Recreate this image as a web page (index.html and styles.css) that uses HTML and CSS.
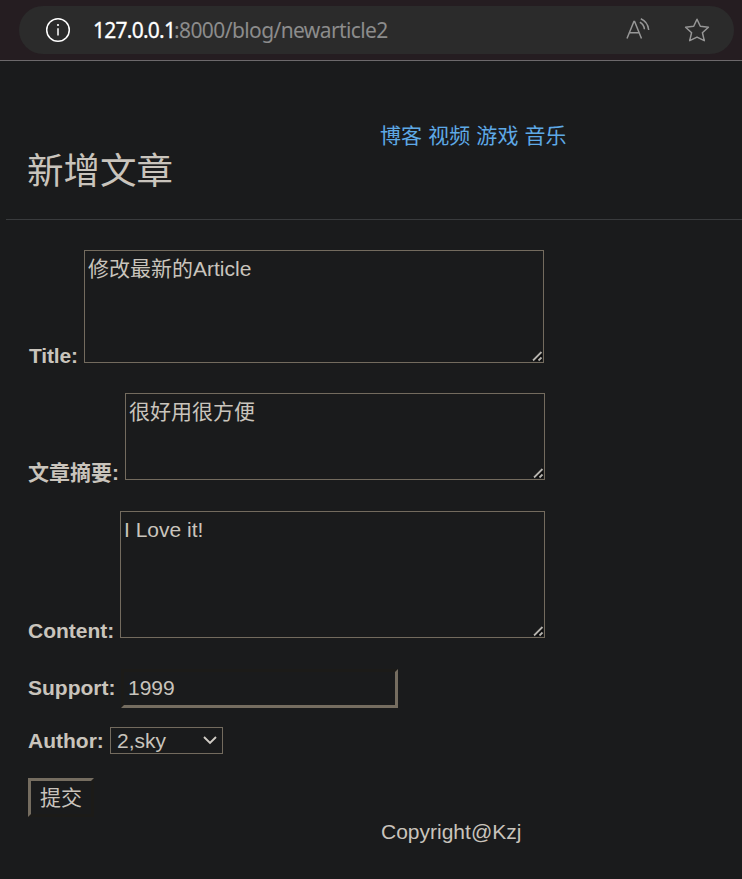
FILE: index.html
```html
<!DOCTYPE html>
<html lang="zh-CN">
<head>
<meta charset="utf-8">
<title>新增文章</title>
<link rel="stylesheet" href="styles.css">
</head>
<body>
<header class="toolbar">
  <div class="address">
    <svg class="info" width="26" height="26" viewBox="0 0 26 26" fill="none" stroke="#fff"><circle cx="13" cy="13" r="11.3" stroke-width="1.5"/><path d="M13 11.2v7.3" stroke-width="1.5"/><circle cx="13" cy="8" r="1.1" fill="#fff" stroke="none"/></svg>
    <span class="url"><span class="host">127.0.0.1</span><span class="path">:8000/blog/newarticle2</span></span>
    <svg class="read" width="26" height="26" viewBox="0 0 26 26" fill="none" stroke="#979797" stroke-width="1.5"><path d="M2 21.5 8.9 4.5h.7l6.9 17M4.6 15.7h9.4M14.8 5.2c2.6 1.2 4.3 3.9 4.6 7M15.8 1.8c4.3 1.8 7.3 6 7.9 11.2"/></svg>
    <svg class="star" width="26" height="26" viewBox="0 0 26 26" fill="none" stroke="#979797" stroke-width="1.5" stroke-linejoin="round"><path d="m13 2.2 3.3 7 8.1 1.1-6 5.4 1.9 8-7.3-3.6-7.3 3.6 1.9-8-6-5.4 8.1-1.1z"/></svg>
  </div>
</header>
<main class="page">
  <nav class="nav"><a>博客</a> <a>视频</a> <a>游戏</a> <a>音乐</a></nav>
  <h1 class="heading">新增文章</h1>
  <hr class="rule">
  <form class="form">
    <div class="row row-title">
      <label for="title">Title:</label>
      <div class="area"><textarea id="title">修改最新的Article</textarea><svg class="grip" width="12" height="12" viewBox="0 0 12 12"><path d="M0 11 11 0v11z" fill="#0c0c0c"/><path d="m2 10.5 8.5-8.5M7.5 10.5l3-3" stroke="#b5b3ae" stroke-width="1.8"/></svg></div>
    </div>
    <div class="row row-summary">
      <label for="summary">文章摘要:</label>
      <div class="area"><textarea id="summary">很好用很方便</textarea><svg class="grip" width="12" height="12" viewBox="0 0 12 12"><path d="M0 11 11 0v11z" fill="#0c0c0c"/><path d="m2 10.5 8.5-8.5M7.5 10.5l3-3" stroke="#b5b3ae" stroke-width="1.8"/></svg></div>
    </div>
    <div class="row row-content">
      <label for="content">Content:</label>
      <div class="area"><textarea id="content">I Love it!</textarea><svg class="grip" width="12" height="12" viewBox="0 0 12 12"><path d="M0 11 11 0v11z" fill="#0c0c0c"/><path d="m2 10.5 8.5-8.5M7.5 10.5l3-3" stroke="#b5b3ae" stroke-width="1.8"/></svg></div>
    </div>
    <div class="row row-support">
      <label for="support">Support:</label>
      <input class="support" id="support" value="1999">
    </div>
    <div class="row row-author">
      <label>Author:</label>
      <div class="select"><span>2,sky</span><svg width="14" height="9" viewBox="0 0 14 9" fill="none" stroke="#d0ccc5" stroke-width="1.9"><path d="m1 1 6 6 6-6"/></svg></div>
    </div>
    <button class="submit" type="button">提交</button>
  </form>
  <footer class="footer">Copyright@Kzj</footer>
</main>
</body>
</html>
```

FILE: styles.css
```css
* { box-sizing: border-box; }
body {
  margin: 0;
  height: 879px;
  overflow: hidden;
  background: #1a1b1c;
  color: #c9c4bc;
  font: 21px/24px "Liberation Sans", "Noto Sans CJK SC", sans-serif;
}
.toolbar {
  height: 61px;
  padding: 6px 8px 0 19px;
  background: #251d21;
  border-bottom: 1px solid #6c696b;
}
.address {
  display: flex;
  align-items: center;
  height: 48px;
  padding: 0 24px 0 26px;
  border-radius: 24px;
  background: #2b2b2b;
}
.url {
  flex: 1;
  margin-left: 22px;
  font: 21px/28px "Noto Sans", sans-serif;
  white-space: nowrap;
}
.host {
  display: inline-block;
  width: 81px;
  color: #fff;
  letter-spacing: -0.75px;
  -webkit-text-stroke: 0.3px #fff;
}
.path { color: #8c8c8c; letter-spacing: -0.6px; }
.read { margin-right: 33px; }
.page { padding-left: 28px; }
.nav { padding: 63px 0 0 352px; color: #5ea9e6; letter-spacing: 0.1px; }
.heading {
  margin: 4px 0 0 -1px;
  font-size: 36.5px;
  font-weight: 400;
  line-height: 40px;
}
.rule {
  height: 1px;
  margin: 27px 0 0 -22px;
  border: 0;
  background: #393b3d;
}
.row { display: flex; align-items: flex-end; }
label { flex: none; margin-bottom: -5px; font-weight: 700; white-space: nowrap; }
.area { position: relative; width: 100%; height: 100%; }
textarea {
  display: block;
  width: 100%;
  height: 100%;
  padding: 6px 3px;
  overflow: hidden;
  border: 1px solid #736b5e;
  background: transparent;
  color: inherit;
  font: inherit;
  resize: none;
}
.grip { position: absolute; right: 1px; bottom: 1px; }
.row-title { width: 516px; height: 113px; margin-top: 30px; }
.row-title label { width: 56px; padding-left: 1px; letter-spacing: -0.15px; }
.row-summary { width: 517px; height: 87px; margin-top: 30px; }
.row-summary label { width: 97px; }
.row-content { width: 517px; height: 127px; margin-top: 31px; }
.row-content label { width: 92px; }
.row-support { height: 39px; margin-top: 31px; }
.row-support label { width: 93px; margin-bottom: 8px; }
.support {
  width: 277px;
  height: 39px;
  padding: 0 4px 2px;
  border: 3px solid;
  border-color: #1c1b18 #756d60 #756d60 #1c1b18;
  background: transparent;
  color: inherit;
  font: inherit;
}
.row-author { height: 27px; margin-top: 19px; }
.row-author label { width: 82px; margin-bottom: 1px; }
.select {
  display: flex;
  align-items: center;
  justify-content: space-between;
  width: 113px;
  height: 27px;
  padding: 0 5px 0 6px;
  border: 1px solid #736b5e;
}
.submit {
  display: block;
  width: 66px;
  height: 39px;
  margin-top: 24px;
  padding: 0;
  border: 3px solid;
  border-color: #756d60 #1c1b18 #1c1b18 #756d60;
  background: transparent;
  color: inherit;
  font: inherit;
}
.footer { margin: 3px 0 0 353px; }
```
